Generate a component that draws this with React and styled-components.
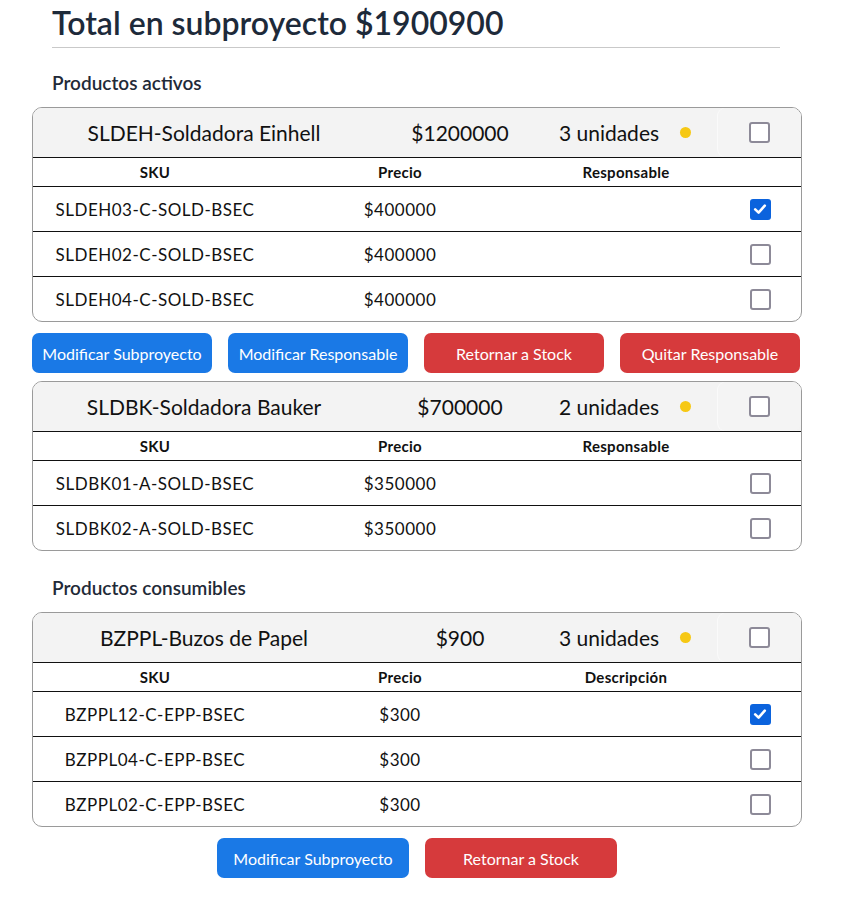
import React, { useState } from 'react';
import styled, { createGlobalStyle } from 'styled-components';

const activeProducts = [
  {
    name: 'SLDEH-Soldadora Einhell',
    price: '$1200000',
    units: '3 unidades',
    items: [
      { sku: 'SLDEH03-C-SOLD-BSEC', price: '$400000', checked: true },
      { sku: 'SLDEH02-C-SOLD-BSEC', price: '$400000', checked: false },
      { sku: 'SLDEH04-C-SOLD-BSEC', price: '$400000', checked: false },
    ],
  },
  {
    name: 'SLDBK-Soldadora Bauker',
    price: '$700000',
    units: '2 unidades',
    items: [
      { sku: 'SLDBK01-A-SOLD-BSEC', price: '$350000', checked: false },
      { sku: 'SLDBK02-A-SOLD-BSEC', price: '$350000', checked: false },
    ],
  },
];

const consumables = [
  {
    name: 'BZPPL-Buzos de Papel',
    price: '$900',
    units: '3 unidades',
    items: [
      { sku: 'BZPPL12-C-EPP-BSEC', price: '$300', checked: true },
      { sku: 'BZPPL04-C-EPP-BSEC', price: '$300', checked: false },
      { sku: 'BZPPL02-C-EPP-BSEC', price: '$300', checked: false },
    ],
  },
];

const Checkbox = ({ initial }) => {
  const [ checked, setChecked ] = useState(!!initial);
  return (
    <Box $checked={checked} onClick={() => setChecked(!checked)}>
      {checked && (
        <svg width="14" height="14" viewBox="0 0 14 14">
          <path d="M2.2 7.4 L5.6 10.6 L11.8 3.6" fill="none" stroke="#fff" strokeWidth="2.6" strokeLinecap="round" strokeLinejoin="round" />
        </svg>
      )}
    </Box>
  );
};

const ProductCard = ({ product, thirdLabel }) => (
  <Card>
    <CardHeader>
      <HeaderName>{product.name}</HeaderName>
      <HeaderPrice>{product.price}</HeaderPrice>
      <HeaderUnits>{product.units}</HeaderUnits>
      <DotCell><Dot /></DotCell>
      <CheckCell><Checkbox /></CheckCell>
    </CardHeader>
    <ColumnRow>
      <span>SKU</span>
      <span>Precio</span>
      <span>{thirdLabel}</span>
      <span />
    </ColumnRow>
    {product.items.map(item => (
      <ItemRow key={item.sku}>
        <span>{item.sku}</span>
        <span>{item.price}</span>
        <span />
        <ItemCheck><Checkbox initial={item.checked} /></ItemCheck>
      </ItemRow>
    ))}
  </Card>
);

const App = () => (
  <>
    <GlobalStyle />
    <Page>
      <TitleBlock>
        <h1>Total en subproyecto $1900900</h1>
      </TitleBlock>

      <SectionTitle>Productos activos</SectionTitle>
      <ProductCard product={activeProducts[0]} thirdLabel="Responsable" />
      <Actions>
        <Button $variant="primary">Modificar Subproyecto</Button>
        <Button $variant="primary">Modificar Responsable</Button>
        <Button $variant="danger">Retornar a Stock</Button>
        <Button $variant="danger">Quitar Responsable</Button>
      </Actions>
      <ProductCard product={activeProducts[1]} thirdLabel="Responsable" />

      <SectionTitle $spaced>Productos consumibles</SectionTitle>
      <ProductCard product={consumables[0]} thirdLabel="Descripción" />
      <Actions $centered>
        <Button $variant="primary" $wide>Modificar Subproyecto</Button>
        <Button $variant="danger" $wide>Retornar a Stock</Button>
      </Actions>
    </Page>
  </>
);

const GlobalStyle = createGlobalStyle`
  body {
    margin: 0;
    background: #fff;
    font-family: Lato, "Noto Sans", sans-serif;
    color: #111;
  }
`;

const Page = styled.div`
  width: 770px;
  padding: 3px 0 24px 32px;
`;

const TitleBlock = styled.div`
  margin: 0 22px 0 20px;
  border-bottom: 1px solid #c9c9c9;
  padding-bottom: 4px;

  h1 {
    margin: 0;
    font-size: 32px;
    line-height: 40px;
    font-weight: 600;
    color: #1d2a3a;
  }
`;

const SectionTitle = styled.h2`
  margin: ${p => (p.$spaced ? '24px' : '22px')} 0 11px 20px;
  font-size: 19px;
  line-height: 26px;
  font-weight: 600;
  color: #1f2a38;
`;

const Card = styled.div`
  border: 1px solid #9a9a9a;
  border-radius: 10px;
  overflow: hidden;
`;

const CardHeader = styled.div`
  display: flex;
  align-items: center;
  height: 49px;
  background: #f3f3f3;
  border-bottom: 1px solid #111;
  font-size: 21px;
  color: #111;
`;

const HeaderName = styled.div`
  width: 342px;
  text-align: center;
`;

const HeaderPrice = styled.div`
  width: 170px;
  text-align: center;
`;

const HeaderUnits = styled.div`
  width: 128px;
  text-align: center;
`;

const DotCell = styled.div`
  width: 24px;
  margin-right: 20px;
  display: flex;
  justify-content: center;
`;

const Dot = styled.span`
  width: 11px;
  height: 11px;
  border-radius: 50%;
  background: #f6c814;
`;

const CheckCell = styled.div`
  flex: 1;
  align-self: stretch;
  display: flex;
  align-items: center;
  justify-content: center;
  background: #f4f4f4;
  border-radius: 8px;
  box-shadow: inset 1px 0 0 #fafafa;
`;

const ColumnRow = styled.div`
  display: grid;
  grid-template-columns: 244px 246px 206px 1fr;
  align-items: center;
  height: 28px;
  border-bottom: 1px solid #111;
  font-size: 15px;
  letter-spacing: 0.3px;
  font-weight: 700;
  text-align: center;
`;

const ItemRow = styled.div`
  display: grid;
  grid-template-columns: 244px 246px 206px 1fr;
  align-items: center;
  height: 44px;
  font-size: 17px;
  letter-spacing: 0.5px;
  text-align: center;

  &:not(:last-child) {
    border-bottom: 1px solid #111;
  }
`;

const ItemCheck = styled.div`
  display: flex;
  justify-content: center;
  padding-right: 10px;
`;

const Box = styled.span`
  box-sizing: border-box;
  width: 21px;
  height: 21px;
  display: inline-flex;
  align-items: center;
  justify-content: center;
  border-radius: 3px;
  cursor: pointer;
  background: ${p => (p.$checked ? '#0b63dd' : '#fff')};
  border: ${p => (p.$checked ? 'none' : '2px solid #8d8a98')};
`;

const Actions = styled.div`
  display: flex;
  gap: 16px;
  justify-content: ${p => (p.$centered ? 'center' : 'flex-start')};
  margin: 11px 0 8px;
`;

const Button = styled.button`
  width: ${p => (p.$wide ? '192px' : '180px')};
  height: 40px;
  border: none;
  border-radius: 7px;
  font-family: inherit;
  font-size: 16px;
  color: #fff;
  cursor: pointer;
  background: ${p => (p.$variant === 'danger' ? '#d63a3c' : '#1a79e6')};
`;

export default App;
